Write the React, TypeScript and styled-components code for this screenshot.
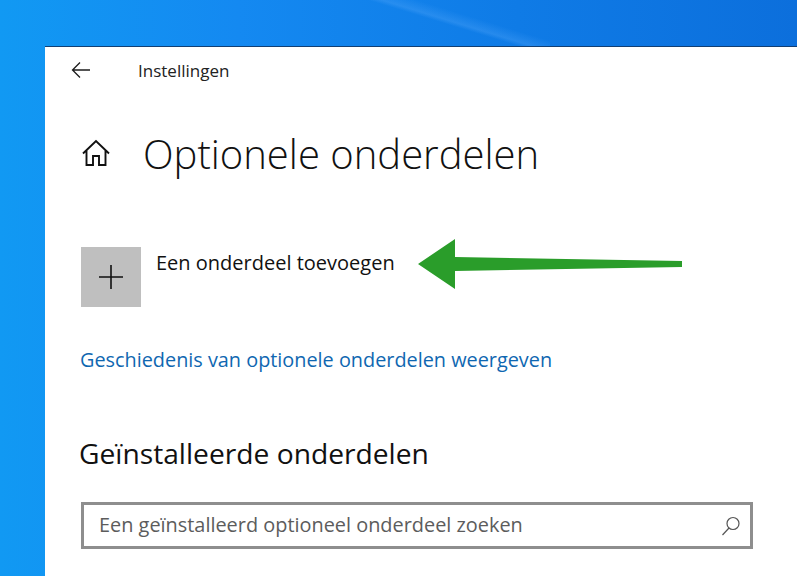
import React from 'react';
import styled, { createGlobalStyle } from 'styled-components';

const GlobalStyle = createGlobalStyle`
  html, body {
    margin: 0;
    padding: 0;
    height: 100%;
    overflow: hidden;
    background: #ffffff;
    font-family: "Open Sans", "Noto Sans", "Liberation Sans", sans-serif;
  }
`;

export default function App() {
  return (
    <Desktop>
      <GlobalStyle />
      <Streak />
      <Window>
        <TopBar>
          <BackButton aria-label="Terug">
            <svg width="20" height="18" viewBox="0 0 20 18" fill="none" stroke="#1c1c1c" strokeWidth="1.3">
              <path d="M1.5 9H19M9 1.5L1.5 9L9 16.5" />
            </svg>
          </BackButton>
          <AppName>Instellingen</AppName>
        </TopBar>
        <TitleRow>
          <svg width="30" height="28" viewBox="0 0 30 28" fill="none" stroke="#111" strokeWidth="1.9">
            <path d="M2 14.5L15 2L28 14.5M5.5 11.5V26H12V17H18V26H24.5V11.5" />
          </svg>
          <Title>Optionele onderdelen</Title>
        </TitleRow>
        <AddRow>
          <AddTile aria-label="Toevoegen">
            <svg width="26" height="26" viewBox="0 0 26 26" stroke="#111" strokeWidth="1.6">
              <path d="M13 1V25M1 13H25" />
            </svg>
          </AddTile>
          <AddLabel>Een onderdeel toevoegen</AddLabel>
          <Pointer width="266" height="52" viewBox="0 0 266 52">
            <path d="M0 25L37 0V18L264 22V28L37 32V50Z" fill="#2a9d2a" />
          </Pointer>
        </AddRow>
        <HistoryLink href="#">Geschiedenis van optionele onderdelen weergeven</HistoryLink>
        <SectionTitle>Geïnstalleerde onderdelen</SectionTitle>
        <SearchBox>
          <SearchText>Een geïnstalleerd optioneel onderdeel zoeken</SearchText>
          <svg width="20" height="20" viewBox="0 0 20 20" fill="none" stroke="#555" strokeWidth="1.2">
            <circle cx="12" cy="7.5" r="6" />
            <path d="M8 12L1.5 19" />
          </svg>
        </SearchBox>
      </Window>
    </Desktop>
  );
}

const Desktop = styled.div`
  position: relative;
  box-sizing: border-box;
  width: 797px;
  height: 576px;
  overflow: hidden;
  padding: 46px 0 0 45px;
  background: linear-gradient(90deg, #1199f3 0%, #1489f1 30%, #0f7be6 65%, #0c6fdc 100%);
`;
const Streak = styled.div`
  position: absolute;
  left: 350px;
  top: 0;
  width: 200px;
  height: 46px;
  background: linear-gradient(17deg, transparent 48%, rgba(90, 170, 250, 0.3) 52%, transparent 62%);
`;
const Window = styled.main`
  position: relative;
  box-sizing: border-box;
  height: 530px;
  display: flex;
  flex-direction: column;
  background: #ffffff;
  border-top: 1px solid #123f73;
  padding-left: 36px;
`;
const TopBar = styled.header`
  display: flex;
  align-items: center;
  height: 48px;
`;
const BackButton = styled.div`
  display: flex;
  width: 67px;
  margin-left: -10px;
  padding-bottom: 3px;
`;
const AppName = styled.span`
  font-size: 17px;
  padding-bottom: 2px;
  color: #222222;
`;
const TitleRow = styled.div`
  display: flex;
  align-items: center;
  gap: 32px;
  margin-top: 28px;
  height: 60px;
`;
const Title = styled.h1`
  margin: 0;
  font-size: 40px;
  font-weight: 300;
  color: #111111;
`;
const AddRow = styled.div`
  position: relative;
  display: flex;
  align-items: flex-start;
  gap: 15px;
  margin-top: 64px;
`;
const AddTile = styled.div`
  display: flex;
  align-items: center;
  justify-content: center;
  width: 60px;
  height: 60px;
  background: #bfbfbf;
`;
const AddLabel = styled.span`
  font-size: 20px;
  line-height: 32px;
  color: #111111;
`;
const Pointer = styled.svg`
  position: absolute;
  left: 337px;
  top: -8px;
`;
const HistoryLink = styled.a`
  margin-top: 40px;
  margin-left: -1px;
  font-size: 19.85px;
  line-height: 26px;
  color: #0f67b1;
  text-decoration: none;
`;
const SectionTitle = styled.h2`
  margin: 62px 0 0 -2px;
  font-size: 28.2px;
  line-height: 36px;
  font-weight: 400;
  color: #111111;
`;
const SearchBox = styled.div`
  box-sizing: border-box;
  display: flex;
  align-items: center;
  justify-content: space-between;
  width: 672px;
  height: 47px;
  margin-top: 31px;
  padding: 0 9px 0 15px;
  border: 3px solid #8e8e8e;
`;
const SearchText = styled.span`
  font-size: 19.9px;
  padding-bottom: 3px;
  color: #5c5c5c;
`;
